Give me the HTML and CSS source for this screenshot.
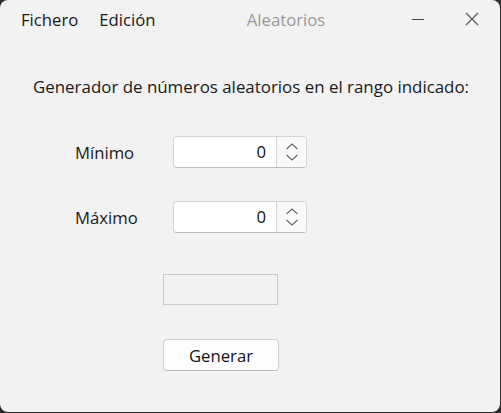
FILE: index.html
```html
<!DOCTYPE html>
<html lang="es">
<head>
<meta charset="utf-8">
<title>Aleatorios</title>
<link rel="stylesheet" href="styles.css">
</head>
<body>
<div class="window">
  <div class="titlebar">
    <nav class="menu">
      <span class="menu-item">Fichero</span>
      <span class="menu-item">Edición</span>
    </nav>
    <div class="title">Aleatorios</div>
    <div class="controls">
      <span class="ctrl">
        <svg width="12" height="12" viewBox="0 0 12 12"><path d="M0 6.5H12" stroke="#444" stroke-width="1"/></svg>
      </span>
      <span class="ctrl">
        <svg width="14" height="14" viewBox="0 0 14 14"><path d="M1 1L13 13M13 1L1 13" stroke="#555" stroke-width="1.1" fill="none"/></svg>
      </span>
    </div>
  </div>
  <div class="content">
    <p class="heading">Generador de números aleatorios en el rango indicado:</p>
    <div class="row">
      <span class="label">Mínimo</span>
      <div class="spin">
        <span class="value">0</span>
        <span class="arrows">
          <svg width="14" height="22" viewBox="0 0 14 22"><path d="M1.5 8L7 3L12.5 8M1.5 14L7 19L12.5 14" stroke="#666" stroke-width="1.1" fill="none"/></svg>
        </span>
      </div>
    </div>
    <div class="row">
      <span class="label">Máximo</span>
      <div class="spin">
        <span class="value">0</span>
        <span class="arrows">
          <svg width="14" height="22" viewBox="0 0 14 22"><path d="M1.5 8L7 3L12.5 8M1.5 14L7 19L12.5 14" stroke="#666" stroke-width="1.1" fill="none"/></svg>
        </span>
      </div>
    </div>
    <div class="result"></div>
    <button class="btn">Generar</button>
  </div>
</div>
</body>
</html>
```
FILE: styles.css
```css
html, body {
  margin: 0;
  padding: 0;
  background: #2b2b2b;
  width: 501px;
  height: 413px;
  overflow: hidden;
}
.window {
  width: 500px;
  height: 412px;
  background: #f2f2f2;
  border-radius: 8px;
  font-family: "Open Sans", "Noto Sans", sans-serif;
  font-size: 16.7px;
  color: #1a1a1a;
  display: flex;
  flex-direction: column;
}
.titlebar {
  height: 40px;
  display: flex;
  align-items: center;
  position: relative;
}
.menu {
  display: flex;
  gap: 21px;
  padding-left: 21px;
  padding-bottom: 1px;
}
.title {
  position: absolute;
  left: 0;
  right: 0;
  top: 0;
  height: 40px;
  line-height: 40px;
  text-align: center;
  padding-left: 72px;
  color: #9a9a9a;
  pointer-events: none;
}
.controls {
  margin-left: auto;
  display: flex;
  align-items: center;
  gap: 41px;
  padding-right: 21px;
  padding-bottom: 3px;
}
.ctrl { display: flex; }
.content {
  display: flex;
  flex-direction: column;
  align-items: flex-start;
}
.heading {
  margin: 35px 0 0 33px;
  line-height: 24px;
  font-size: 16.9px;
}
.row {
  display: flex;
  align-items: center;
  margin-top: 37px;
  margin-left: 75px;
}
.row + .row { margin-top: 33px; }
.label {
  width: 98px;
}
.spin {
  width: 132px;
  height: 30px;
  border: 1px solid #d4d4d4;
  border-bottom-color: #bdbdbd;
  border-radius: 4px;
  background: #fff;
  display: flex;
  overflow: hidden;
}
.value {
  flex: 1;
  text-align: right;
  padding-right: 10px;
  line-height: 30px;
  color: #111;
}
.arrows {
  width: 29px;
  border-left: 1px solid #d4d4d4;
  background: #f9f9f9;
  display: flex;
  align-items: center;
  justify-content: center;
}
.result {
  width: 113px;
  height: 29px;
  border: 1px solid #c8c8c8;
  margin: 41px 0 0 163px;
}
.btn {
  margin: 34px 0 0 163px;
  width: 116px;
  height: 32px;
  border: 1px solid #cfcfcf;
  border-bottom-color: #b8b8b8;
  border-radius: 4px;
  background: #fdfdfd;
  font-family: inherit;
  font-size: 16.7px;
  color: #111;
  padding: 0;
}
```
